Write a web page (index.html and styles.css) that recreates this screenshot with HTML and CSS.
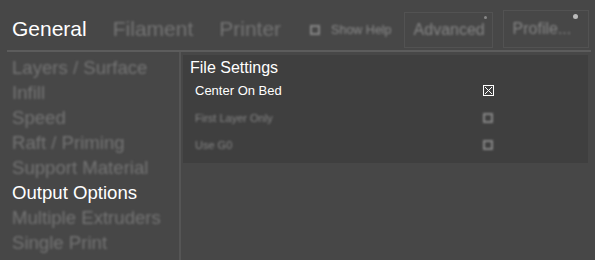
FILE: index.html
```html
<!DOCTYPE html>
<html lang="en">
<head>
    <meta charset="UTF-8">
    <meta name="viewport" content="width=device-width, initial-scale=1.0">
    <title>Settings</title>
    <link rel="stylesheet" href="styles.css">
</head>
<body>
    <div class="topbar">
        <div class="tabs">
            <span class="tab active">General</span>
            <span class="tab dim">Filament</span>
            <span class="tab dim">Printer</span>
        </div>
        <div class="help dim"><span class="box"></span>Show Help</div>
        <div class="btn adv"><span class="label dim">Advanced</span><span class="dot small"></span></div>
        <div class="btn prof"><span class="label dim">Profile...</span><span class="dot"></span></div>
    </div>
    <div class="rule"></div>

    <div class="main">
        <div class="sidebar">
            <div class="item dim">Layers / Surface</div>
            <div class="item dim">Infill</div>
            <div class="item dim">Speed</div>
            <div class="item dim">Raft / Priming</div>
            <div class="item dim">Support Material</div>
            <div class="item active">Output Options</div>
            <div class="item dim">Multiple Extruders</div>
            <div class="item dim">Single Print</div>
        </div>
        <div class="content">
            <div class="panel">
                <div class="panel-title">File Settings</div>
                <div class="row">
                    <span class="name">Center On Bed</span>
                    <span class="check checked">
                        <svg width="11" height="11" viewBox="0 0 11 11">
                            <rect x="0.5" y="0.5" width="10" height="10" fill="none" stroke="#fff" stroke-width="1"/>
                            <path d="M2 2 L9 9 M9 2 L2 9" stroke="#fff" stroke-width="1"/>
                        </svg>
                    </span>
                </div>
                <div class="row small">
                    <span class="name dim">First Layer Only</span>
                    <span class="check dim"><span class="box"></span></span>
                </div>
                <div class="row small">
                    <span class="name dim">Use G0</span>
                    <span class="check dim"><span class="box"></span></span>
                </div>
            </div>
        </div>
    </div>
</body>
</html>
```

FILE: styles.css
```css
body {
    margin: 0;
    width: 595px;
    height: 260px;
    overflow: hidden;
    background-color: #474747;
    color: #ffffff;
    font-family: "Liberation Sans", Arial, sans-serif;
}

.dim {
    color: #747474;
    filter: blur(1.3px);
}

.topbar {
    display: flex;
    align-items: center;
    height: 50px;
    padding-left: 12px;
}

.tabs {
    display: flex;
    gap: 26px;
    font-size: 21px;
    margin-top: 8px;
}

.help {
    display: flex;
    align-items: center;
    gap: 11px;
    font-size: 12.5px;
    margin-left: 29px;
    margin-top: 9px;
    color: #8a8a8a;
}

.help .box,
.check .box {
    display: block;
    width: 6px;
    height: 6px;
    border: 2px solid #858585;
}

.btn {
    position: relative;
    display: flex;
    align-items: center;
    border: 1px solid #525252;
    box-sizing: border-box;
}

.btn .label {
    font-size: 16px;
    color: #858585;
}

.adv {
    margin-left: 12px;
    width: 89px;
    height: 36px;
    margin-top: 9px;
    padding-left: 9px;
}

.prof {
    margin-left: 10px;
    width: 86px;
    height: 38px;
    margin-top: 8px;
    padding-left: 9px;
}

.dot {
    position: absolute;
    top: 3px;
    right: 10px;
    width: 5px;
    height: 5px;
    border-radius: 50%;
    background-color: #bbbbbb;
    filter: blur(0.6px);
}

.dot.small {
    width: 3px;
    height: 3px;
    right: 5px;
    background-color: #888888;
}

.rule {
    height: 2px;
    margin: 0 4px 0 7px;
    background-color: #5c5c5c;
}

.main {
    display: flex;
}

.sidebar {
    width: 181px;
    height: 208px;
    border-right: 2px solid #555555;
    padding-left: 12px;
    box-sizing: border-box;
}

.item {
    font-size: 18.6px;
    height: 25px;
    line-height: 25px;
    white-space: nowrap;
}

.item:first-child {
    margin-top: 3px;
}

.content {
    flex: 1;
    padding: 3px 7px 0 2px;
}

.panel {
    background-color: #3f3f3f;
    height: 108px;
    padding: 3px 0 0 7px;
    box-sizing: border-box;
}

.panel-title {
    font-size: 16px;
    height: 19px;
    line-height: 19px;
}

.row {
    display: flex;
    align-items: center;
    height: 27px;
    padding-left: 5px;
    font-size: 13px;
}

.row.small {
    font-size: 11px;
}

.row.small .name {
    color: #858585;
}

.row .name {
    width: 288px;
}

.check {
    display: flex;
    align-items: center;
}
```
